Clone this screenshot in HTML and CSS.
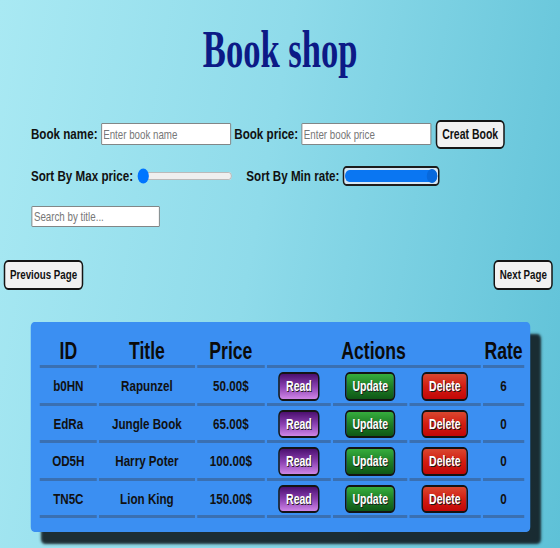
FILE: index.html
```html
<!DOCTYPE html>
<html lang="en">
<head>
<meta charset="utf-8">
<title>Book shop</title>
<link rel="stylesheet" href="styles.css">
</head>
<body>
<div class="page">
  <h1 class="title"><span class="title-text">Book shop</span></h1>

  <div class="form-row create-row">
    <label class="lbl">Book name:</label>
    <input class="txt" type="text" placeholder="Enter book name">
    <label class="lbl">Book price:</label>
    <input class="txt" type="text" placeholder="Enter book price">
    <button class="btn btn-create">Creat Book</button>
  </div>

  <div class="form-row sort-row">
    <label class="lbl">Sort By Max price:</label>
    <input class="range-price" type="range" min="0" max="100" value="0">
    <label class="lbl rate-lbl">Sort By Min rate:</label>
    <input class="range-rate" type="range" min="0" max="10" value="10">
  </div>

  <div class="search-row">
    <input class="txt search" type="text" placeholder="Search by title...">
  </div>

  <div class="pager">
    <button class="btn btn-page">Previous Page</button>
    <button class="btn btn-page">Next Page</button>
  </div>

  <div class="card">
    <table class="books">
      <colgroup>
        <col class="c-id"><col class="c-title"><col class="c-price">
        <col class="c-read"><col class="c-update"><col class="c-delete"><col class="c-rate">
      </colgroup>
      <thead>
        <tr><th>ID</th><th>Title</th><th>Price</th><th colspan="3">Actions</th><th>Rate</th></tr>
      </thead>
      <tbody>
        <tr><td>b0HN</td><td>Rapunzel</td><td>50.00$</td>
          <td><button class="act read">Read</button></td>
          <td><button class="act update">Update</button></td>
          <td><button class="act delete">Delete</button></td><td>6</td></tr>
        <tr><td>EdRa</td><td>Jungle Book</td><td>65.00$</td>
          <td><button class="act read">Read</button></td>
          <td><button class="act update">Update</button></td>
          <td><button class="act delete">Delete</button></td><td>0</td></tr>
        <tr><td>OD5H</td><td>Harry Poter</td><td>100.00$</td>
          <td><button class="act read">Read</button></td>
          <td><button class="act update">Update</button></td>
          <td><button class="act delete">Delete</button></td><td>0</td></tr>
        <tr><td>TN5C</td><td>Lion King</td><td>150.00$</td>
          <td><button class="act read">Read</button></td>
          <td><button class="act update">Update</button></td>
          <td><button class="act delete">Delete</button></td><td>0</td></tr>
      </tbody>
    </table>
  </div>
</div>
</body>
</html>
```

FILE: styles.css
```css
html {
  overflow: hidden;
}
body {
  margin: 0;
  padding: 0;
  min-height: 548px;
  background: linear-gradient(100deg, #a9e9f3 0%, #8fdbea 45%, #5ec1d7 100%);
  font-family: "Liberation Sans", Arial, sans-serif;
  color: #111;
}
.page {
  width: 746.5px;
  transform: scaleX(0.75);
  transform-origin: 0 0;
}
.title {
  margin: 19px 0 0;
  text-align: center;
  font-family: "Liberation Serif", "Times New Roman", serif;
  font-weight: bold;
  font-size: 53px;
  line-height: 60px;
  color: #0c1a86;
}
.title-text {
  display: inline-block;
  transform: scaleX(0.87);
}
.form-row {
  display: flex;
  align-items: center;
  padding-left: 41.3px;
}
.create-row {
  margin-top: 40.5px;
  height: 29px;
  gap: 4.5px;
}
.lbl {
  font-weight: bold;
  font-size: 15.5px;
  color: #111;
}
.txt {
  box-sizing: border-box;
  width: 173.3px;
  height: 22px;
  margin: 0;
  padding: 0 2px;
  border: 1px solid #777;
  border-radius: 1px;
  background: #fff;
  font-family: "Liberation Sans", Arial, sans-serif;
  font-size: 13px;
  color: #222;
}
.txt::placeholder {
  color: #777;
}
.btn {
  box-sizing: border-box;
  margin: 0;
  padding: 1px 6px;
  height: 29px;
  border: 2px solid #151515;
  border-radius: 6px;
  background: #f1f1f1;
  font-family: "Liberation Sans", Arial, sans-serif;
  font-weight: bold;
  font-size: 13px;
  color: #111;
}
.btn-create {
  font-size: 14px;
  margin-left: 1px;
  width: 92px;
}
.sort-row {
  margin-top: 16.5px;
  height: 22px;
}
.range-price {
  width: 127px;
  height: 16px;
  margin: 0 0 0 5.4px;
}
.rate-lbl {
  margin-left: 18.7px;
}
.range-rate {
  -webkit-appearance: none;
  appearance: none;
  box-sizing: border-box;
  width: 128.4px;
  height: 20px;
  margin: 0 0 0 4.9px;
  padding: 2px 1px;
  border: 2px solid #1c1c1c;
  border-radius: 5px;
  background: #d6e6f3;
}
.range-rate::-webkit-slider-runnable-track {
  height: 12px;
  border-radius: 6px;
  background: #0a76f2;
}
.range-rate::-webkit-slider-thumb {
  -webkit-appearance: none;
  appearance: none;
  width: 14px;
  height: 14px;
  margin-top: -1px;
  border-radius: 50%;
  background: #0768dc;
}
.search-row {
  margin-top: 19px;
  padding-left: 42.2px;
  height: 21px;
}
.search {
  width: 171px;
  height: 21px;
}
.pager {
  display: flex;
  justify-content: space-between;
  margin-top: 32.5px;
  padding: 0 9.3px 0 5.3px;
}
.btn-page {
  height: 30px;
}
.card {
  box-sizing: border-box;
  width: 665.3px;
  margin: 32.5px 0 0 41.3px;
  padding: 8px 6.7px 12px 9px;
  border-radius: 5px;
  background: #3b8ff2;
  box-shadow: 14px 12px 3px rgba(18, 30, 36, 0.92);
}
.books {
  table-layout: fixed;
  width: 651.9px;
  border-collapse: separate;
  border-spacing: 3px 2px;
  text-align: center;
}
.c-id { width: 75.6px; }
.c-title { width: 128px; }
.c-price { width: 89.8px; }
.c-read { width: 85.8px; }
.c-update { width: 98.3px; }
.c-delete { width: 94.7px; }
.c-rate { width: 55.7px; }
.books th {
  padding: 5px 0 0;
  height: 28px;
  line-height: 28px;
  font-size: 23.5px;
  font-weight: bold;
  color: #0b0b0b;
  border-bottom: 3px solid #3a70b2;
}
.books td {
  padding: 2px 0;
  height: 28.5px;
  font-size: 15.5px;
  font-weight: bold;
  color: #111;
  border-bottom: 3px solid #3a70b2;
  vertical-align: middle;
}
.act {
  box-sizing: border-box;
  height: 28.5px;
  margin: 0;
  padding: 0 8px;
  border: 2px solid #141414;
  border-radius: 6px;
  font-family: "Liberation Sans", Arial, sans-serif;
  font-weight: bold;
  font-size: 14px;
  color: #fff;
  text-shadow: 1px 1px 0 #1a1a1a;
  vertical-align: middle;
}
.read {
  background: linear-gradient(to bottom, #4b106f 0%, #8a3fb0 50%, #cf86e6 100%);
}
.update {
  background: linear-gradient(to bottom, #36ad3d 0%, #1e7f26 50%, #0f5716 100%);
}
.delete {
  background: linear-gradient(to bottom, #d9472f 0%, #d21d12 50%, #c20707 100%);
}
```
